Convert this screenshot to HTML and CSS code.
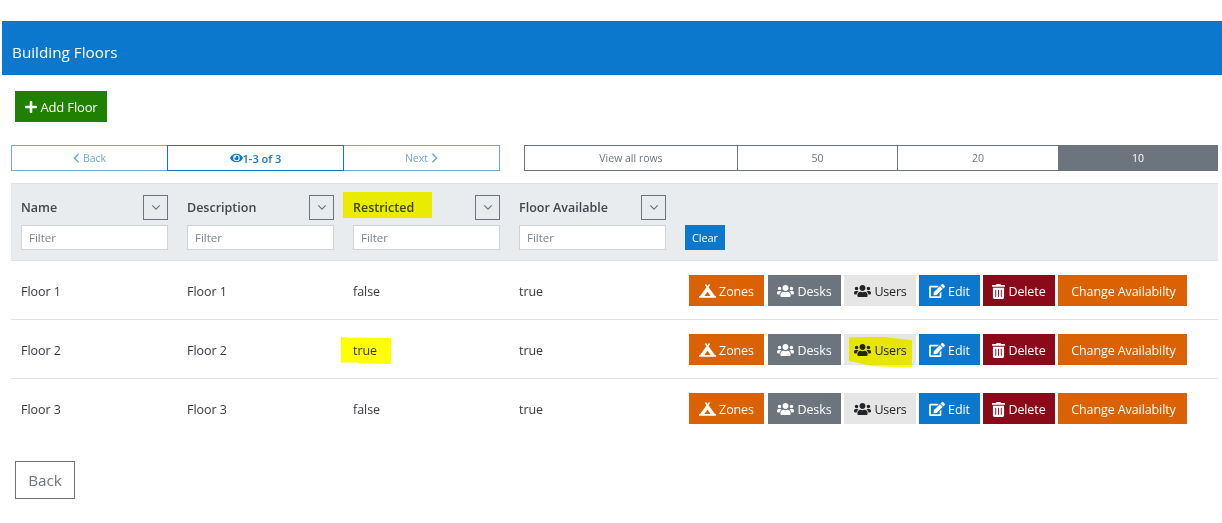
FILE: index.html
```html
<!DOCTYPE html>
<html lang="en">
<head>
<meta charset="utf-8">
<title>Building Floors</title>
<link rel="stylesheet" href="styles.css">
</head>
<body>
<svg class="defs" aria-hidden="true">
  <symbol id="i-plus" viewBox="0 0 448 512"><path d="M416 208H272V64c0-17.67-14.33-32-32-32h-32c-17.67 0-32 14.33-32 32v144H32c-17.67 0-32 14.33-32 32v32c0 17.67 14.33 32 32 32h144v144c0 17.67 14.33 32 32 32h32c17.67 0 32-14.33 32-32V304h144c17.67 0 32-14.33 32-32v-32c0-17.67-14.33-32-32-32z"/></symbol>
  <symbol id="i-eye" viewBox="0 0 576 512"><path d="M572.52 241.4C518.29 135.59 410.93 64 288 64S57.68 135.64 3.48 241.41a32.35 32.35 0 0 0 0 29.19C57.71 376.41 165.07 448 288 448s230.32-71.64 284.52-177.41a32.35 32.35 0 0 0 0-29.19zM288 400a144 144 0 1 1 144-144 143.93 143.93 0 0 1-144 144zm0-240a95.31 95.31 0 0 0-25.31 3.79 47.85 47.85 0 0 1-66.9 66.9A95.78 95.78 0 1 0 288 160z"/></symbol>
  <symbol id="i-camp" viewBox="0 0 640 512"><path d="M624 448h-24.68L359.54 117.75l53.41-73.55c5.19-7.15 3.61-17.16-3.54-22.35l-25.9-18.79c-7.15-5.19-17.15-3.61-22.35 3.55L320 63.3 278.83 6.6c-5.19-7.15-15.2-8.74-22.35-3.55l-25.88 18.8c-7.15 5.19-8.74 15.2-3.54 22.35l53.41 73.55L40.68 448H16c-8.84 0-16 7.16-16 16v32c0 8.84 7.16 16 16 16h608c8.84 0 16-7.16 16-16v-32c0-8.84-7.16-16-16-16zM320 288l116.36 160H203.64L320 288z"/></symbol>
  <symbol id="i-users" viewBox="0 0 640 512"><path d="M96 224c35.3 0 64-28.7 64-64s-28.7-64-64-64-64 28.7-64 64 28.7 64 64 64zm448 0c35.3 0 64-28.7 64-64s-28.7-64-64-64-64 28.7-64 64 28.7 64 64 64zm32 32h-64c-17.6 0-33.5 7.1-45.1 18.6 40.3 22.1 68.9 62 75.1 109.4h66c17.7 0 32-14.3 32-32v-32c0-35.3-28.7-64-64-64zm-256 0c61.9 0 112-50.1 112-112S381.9 32 320 32 208 82.1 208 144s50.1 112 112 112zm76.8 32h-8.3c-20.8 10-43.9 16-68.5 16s-47.6-6-68.5-16h-8.3C179.6 288 128 339.6 128 403.2V432c0 26.5 21.5 48 48 48h288c26.5 0 48-21.5 48-48v-28.8c0-63.6-51.6-115.2-115.2-115.2zm-223.7-13.4C161.5 263.1 145.6 256 128 256H64c-35.3 0-64 28.7-64 64v32c0 17.7 14.3 32 32 32h65.9c6.3-47.4 34.9-87.3 75.2-109.4z"/></symbol>
  <symbol id="i-edit" viewBox="0 0 576 512"><path d="M402.6 83.2l90.2 90.2c3.8 3.8 3.8 10 0 13.8L274.4 405.6l-92.8 10.3c-12.4 1.4-22.9-9.1-21.5-21.5l10.3-92.8L388.8 83.2c3.8-3.8 10-3.8 13.8 0zm162-22.9l-48.8-48.8c-15.2-15.2-39.9-15.2-55.2 0l-35.4 35.4c-3.8 3.8-3.8 10 0 13.8l90.2 90.2c3.8 3.8 10 3.8 13.8 0l35.4-35.4c15.2-15.3 15.2-40 0-55.2zM384 346.2V448H64V128h229.8c3.2 0 6.2-1.3 8.5-3.5l40-40c7.6-7.6 2.2-20.5-8.5-20.5H48C21.5 64 0 85.5 0 112v352c0 26.5 21.5 48 48 48h352c26.5 0 48-21.5 48-48V306.2c0-10.7-12.9-16-20.5-8.5l-40 40c-2.2 2.3-3.5 5.3-3.5 8.5z"/></symbol>
  <symbol id="i-trash" viewBox="0 0 448 512"><path d="M32 464a48 48 0 0 0 48 48h288a48 48 0 0 0 48-48V128H32zm272-256a16 16 0 0 1 32 0v224a16 16 0 0 1-32 0zm-96 0a16 16 0 0 1 32 0v224a16 16 0 0 1-32 0zm-96 0a16 16 0 0 1 32 0v224a16 16 0 0 1-32 0zM432 32H312l-9.4-18.7A24 24 0 0 0 281.1 0H166.8a23.72 23.72 0 0 0-21.4 13.3L136 32H16A16 16 0 0 0 0 48v32a16 16 0 0 0 16 16h416a16 16 0 0 0 16-16V48a16 16 0 0 0-16-16z"/></symbol>
  <symbol id="i-down" viewBox="0 0 12 8"><path d="M1.5 1.5 6 6l4.5-4.5" fill="none" stroke="currentColor" stroke-width="1.4"/></symbol>
  <symbol id="i-left" viewBox="0 0 8 12"><path d="M6.5 1 1.5 6l5 5" fill="none" stroke="currentColor" stroke-width="1.8"/></symbol>
  <symbol id="i-right" viewBox="0 0 8 12"><path d="M1.5 1l5 5-5 5" fill="none" stroke="currentColor" stroke-width="1.8"/></symbol>
</svg>

<header class="page-title">Building Floors</header>

<div class="toolbar">
  <button class="btn btn-add"><svg class="ic ic-plus"><use href="#i-plus"/></svg>Add Floor</button>
</div>

<div class="pager-row">
  <div class="pager">
    <a class="pg pg-muted pg-back"><svg class="ic ic-ch"><use href="#i-left"/></svg>Back</a>
    <span class="pg pg-current"><svg class="ic ic-eye"><use href="#i-eye"/></svg>1-3 of 3</span>
    <a class="pg pg-muted pg-next">Next<svg class="ic ic-ch"><use href="#i-right"/></svg></a>
  </div>
  <div class="sizes">
    <a class="sz sz-all">View all rows</a>
    <a class="sz sz-50">50</a>
    <a class="sz sz-20">20</a>
    <a class="sz sz-10 is-active">10</a>
  </div>
</div>

<table class="grid">
  <colgroup><col class="c"><col class="c"><col class="c"><col class="c"><col></colgroup>
  <thead>
    <tr>
      <th><div class="th-top"><span>Name</span><button class="sort"><svg><use href="#i-down"/></svg></button></div><input class="filter" placeholder="Filter"></th>
      <th><div class="th-top"><span>Description</span><button class="sort"><svg><use href="#i-down"/></svg></button></div><input class="filter" placeholder="Filter"></th>
      <th class="rel"><div class="th-top"><span>Restricted</span><button class="sort"><svg><use href="#i-down"/></svg></button></div><input class="filter" placeholder="Filter"><i class="mark mark-head"></i></th>
      <th><div class="th-top"><span>Floor Available</span><button class="sort"><svg><use href="#i-down"/></svg></button></div><input class="filter" placeholder="Filter"></th>
      <th class="th-clear"><button class="btn btn-clear">Clear</button></th>
    </tr>
  </thead>
  <tbody>
    <tr>
      <td>Floor 1</td><td>Floor 1</td><td>false</td><td>true</td>
      <td class="td-acts"><div class="acts">
        <button class="btn a-zones"><svg class="ic ic-camp"><use href="#i-camp"/></svg>Zones</button>
        <button class="btn a-desks"><svg class="ic ic-users"><use href="#i-users"/></svg>Desks</button>
        <button class="btn a-users"><svg class="ic ic-users"><use href="#i-users"/></svg>Users</button>
        <button class="btn a-edit"><svg class="ic ic-edit"><use href="#i-edit"/></svg>Edit</button>
        <button class="btn a-del"><svg class="ic ic-trash"><use href="#i-trash"/></svg>Delete</button>
        <button class="btn a-chg">Change Availabilty</button>
      </div></td>
    </tr>
    <tr>
      <td>Floor 2</td><td>Floor 2</td><td class="rel">true<i class="mark mark-true"></i></td><td>true</td>
      <td class="td-acts"><div class="acts">
        <button class="btn a-zones"><svg class="ic ic-camp"><use href="#i-camp"/></svg>Zones</button>
        <button class="btn a-desks"><svg class="ic ic-users"><use href="#i-users"/></svg>Desks</button>
        <button class="btn a-users rel"><svg class="ic ic-users"><use href="#i-users"/></svg>Users<i class="mark mark-users"></i></button>
        <button class="btn a-edit"><svg class="ic ic-edit"><use href="#i-edit"/></svg>Edit</button>
        <button class="btn a-del"><svg class="ic ic-trash"><use href="#i-trash"/></svg>Delete</button>
        <button class="btn a-chg">Change Availabilty</button>
      </div></td>
    </tr>
    <tr class="last">
      <td>Floor 3</td><td>Floor 3</td><td>false</td><td>true</td>
      <td class="td-acts"><div class="acts">
        <button class="btn a-zones"><svg class="ic ic-camp"><use href="#i-camp"/></svg>Zones</button>
        <button class="btn a-desks"><svg class="ic ic-users"><use href="#i-users"/></svg>Desks</button>
        <button class="btn a-users"><svg class="ic ic-users"><use href="#i-users"/></svg>Users</button>
        <button class="btn a-edit"><svg class="ic ic-edit"><use href="#i-edit"/></svg>Edit</button>
        <button class="btn a-del"><svg class="ic ic-trash"><use href="#i-trash"/></svg>Delete</button>
        <button class="btn a-chg">Change Availabilty</button>
      </div></td>
    </tr>
  </tbody>
</table>

<div class="footer">
  <button class="btn btn-back">Back</button>
</div>
</body>
</html>
```

FILE: styles.css
```css
* { box-sizing: border-box; }
html, body { margin: 0; padding: 0; background: #fff; }
body {
  height: 523px;
  overflow: hidden;
  padding-top: 21px;
  font-family: "Open Sans", "Noto Sans", sans-serif;
  font-size: 12.5px;
  color: #212529;
}
.defs { display: none; }
.ic { fill: currentColor; flex: none; display: block; }
.rel { position: relative; }

.page-title {
  margin-left: 2px;
  height: 54px;
  padding: 22px 0 0 10px;
  background: #0b78ce;
  color: #fff;
  font-size: 15.3px;
  line-height: 18px;
}

.btn {
  display: inline-flex;
  align-items: center;
  justify-content: center;
  border: 0;
  padding: 0;
  font-family: inherit;
  font-size: 12.5px;
  letter-spacing: -0.1px;
  color: #fff;
  cursor: pointer;
}

.toolbar { margin: 16px 0 0 15px; height: 31px; display: flex; }
.btn-add { width: 92px; height: 31px; background: #208000; font-size: 13px; letter-spacing: -0.15px; padding-left: 1px; }
.ic-plus { width: 12px; height: 14px; margin-right: 3px; }

.pager-row { display: flex; margin: 23px 0 0 11px; height: 26px; }
.pager { display: flex; width: 489px; }
.pg {
  display: flex;
  align-items: center;
  justify-content: center;
  gap: 3px;
  font-size: 10.5px;
  color: #0b78ce;
}
.pg-muted { color: #6da9dd; border: 1px solid #6aa8dd; width: 156px; }
.pg-back { border-right: 0; }
.pg-next { border-left: 0; }
.pg-current { width: 177px; border: 1px solid #0b78ce; font-size: 11px; font-weight: 600; gap: 0; }
.ic-eye { width: 13px; height: 12px; }
.ic-ch { width: 7px; height: 10px; }

.sizes { display: flex; margin-left: 24px; color: #6c757d; }
.sz {
  display: flex;
  align-items: center;
  justify-content: center;
  height: 26px;
  font-size: 10.5px;
  border: 1px solid #6c757d;
  border-left: 0;
}
.sz-all { width: 214px; border-left: 1px solid #6c757d; }
.sz-50 { width: 160px; }
.sz-20 { width: 161px; }
.sz-10 { width: 159px; }
.is-active { background: #6c757d; color: #fff; }

.grid {
  margin: 12px 0 0 11px;
  width: 1207px;
  table-layout: fixed;
  border-collapse: collapse;
}
.c { width: 166px; }
.grid th {
  height: 77px;
  padding: 11px 0 10px 10px;
  background: #e9ecef;
  border-top: 1px solid #dee2e6;
  border-bottom: 1px solid #dee2e6;
  text-align: left;
  vertical-align: top;
  font-size: 12.5px;
  font-weight: 600;
  color: #3f464c;
}
.th-top {
  display: flex;
  align-items: center;
  justify-content: space-between;
  width: 147px;
  height: 25px;
  margin-bottom: 5px;
}
.sort {
  width: 25px;
  height: 25px;
  padding: 0;
  background: #e9ecef;
  border: 1px solid #6c757d;
  color: #6c757d;
  display: flex;
  align-items: center;
  justify-content: center;
}
.sort svg { width: 10px; height: 7px; display: block; }
.filter {
  display: block;
  width: 147px;
  height: 25px;
  padding: 0 7px 1px;
  border: 1px solid #ced4da;
  background: #fff;
  font-family: inherit;
  font-size: 11.5px;
  color: #495057;
}
.filter::placeholder { color: #7b848c; opacity: 1; }
.grid .th-clear { padding: 41px 0 0 10px; }
.btn-clear { width: 40px; height: 25px; background: #0b78ce; font-size: 11px; padding-bottom: 1px; }

.grid td {
  height: 59px;
  padding: 2px 0 0 10px;
  border-bottom: 1px solid #dee2e6;
  font-size: 12.5px;
  letter-spacing: -0.05px;
  color: #343a40;
  vertical-align: middle;
}
.grid .td-acts { padding-top: 0; }
.grid .last td { border-bottom: 0; }

.acts { display: flex; margin-left: 4px; }
.acts .btn { height: 31px; margin-right: 3px; padding-top: 2px; }
.a-zones { width: 75px; background: #da6204; margin-right: 4px !important; }
.a-desks { width: 73px; background: #6c757d; }
.a-users { width: 72px; background: #e6e6e6; color: #212529; letter-spacing: -0.2px; padding-left: 1px; }
.a-edit { width: 61px; background: #0b78ce; }
.a-del { width: 72px; background: #8a0a1a; }
.a-chg { width: 129px; background: #da6204; padding-left: 2px; }
.ic-camp { width: 17px; height: 14px; margin-right: 3px; }
.ic-users { width: 17px; height: 14px; margin-right: 3px; }
.ic-edit { width: 16px; height: 14px; margin-right: 3px; }
.ic-trash { width: 13px; height: 15px; margin-right: 3px; }

.mark { position: absolute; background: #ffff00; mix-blend-mode: multiply; pointer-events: none; }
.mark-head { left: 0; top: 8px; width: 89px; height: 26px; }
.mark-true { left: -2px; top: 17px; width: 50px; height: 27px; clip-path: polygon(0 0, 24% 4%, 24% 2%, 100% 4%, 100% 100%, 36% 98%, 30% 94%, 0 94%); }
.mark-users { left: 5px; top: 3px; width: 63px; height: 31px; clip-path: polygon(0 3%, 50% 0, 100% 12%, 100% 100%, 38% 96%, 0 78%); }

.footer { margin: 23px 0 0 15px; }
.btn-back { width: 60px; height: 38px; background: #fff; border: 1px solid #6c757d; color: #6c757d; font-size: 15.3px; letter-spacing: 0; }
```
